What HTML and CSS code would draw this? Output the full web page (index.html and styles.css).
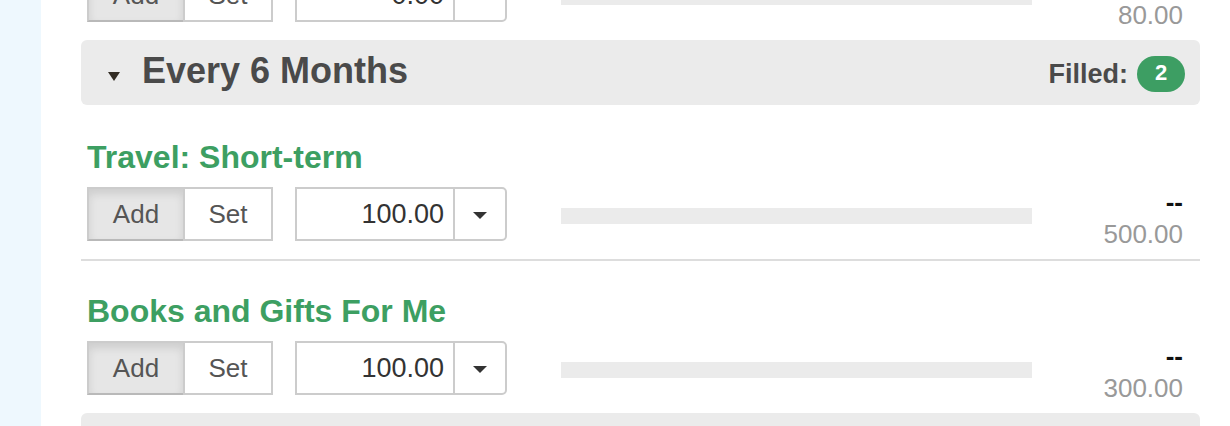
FILE: index.html
```html
<!doctype html>
<html>
    <head>
        <title>Budget</title>
        <link rel="stylesheet" href="styles.css">
    </head>
    <body>
        <div class="sidebar"></div>
        <div class="main">
            <div class="budget">
                <div class="group">
                    <div class="item first">
                        <div class="row">
                            <div class="mode"><button class="add">Add</button><button class="set">Set</button></div>
                            <div class="amount-input"><input class="value" type="text" value="0.00"><span class="pick"><span class="caret"></span></span></div>
                            <div class="bar"></div>
                            <div class="totals"><div class="spent">--</div><div class="budgeted">80.00</div></div>
                        </div>
                    </div>
                </div>

                <div class="group">
                    <div class="group-header">
                        <span class="toggle"></span>
                        <h2 class="group-title">Every 6 Months</h2>
                        <div class="filled">Filled: <span class="badge">2</span></div>
                    </div>
                    <div class="item">
                        <h3 class="item-title">Travel: Short-term</h3>
                        <div class="row">
                            <div class="mode"><button class="add">Add</button><button class="set">Set</button></div>
                            <div class="amount-input"><input class="value" type="text" value="100.00"><span class="pick"><span class="caret"></span></span></div>
                            <div class="bar"></div>
                            <div class="totals"><div class="spent">--</div><div class="budgeted">500.00</div></div>
                        </div>
                    </div>
                    <div class="item">
                        <h3 class="item-title">Books and Gifts For Me</h3>
                        <div class="row">
                            <div class="mode"><button class="add">Add</button><button class="set">Set</button></div>
                            <div class="amount-input"><input class="value" type="text" value="100.00"><span class="pick"><span class="caret"></span></span></div>
                            <div class="bar"></div>
                            <div class="totals"><div class="spent">--</div><div class="budgeted">300.00</div></div>
                        </div>
                    </div>
                </div>

                <div class="group">
                    <div class="group-header"></div>
                </div>
            </div>
        </div>
    </body>
</html>
```

FILE: styles.css
```css
html, body {
    height: 100%;
    overflow: hidden;
}
body {
    margin: 0;
    display: flex;
    background: #fff;
    color: #333;
    font-family: 'Liberation Sans', Arial, sans-serif;
}
.sidebar {
    flex: none;
    width: 41px;
    background: #eef8fe;
}
.main {
    flex: 1;
    padding: 0 30px 0 40px;
}
.budget {
    margin-top: -32px;
}
.group-header {
    display: flex;
    align-items: center;
    height: 65px;
    padding: 0 15px 0 27px;
    margin-bottom: 2px;
    background: #ebebeb;
    border-radius: 6px;
    color: #4a4a4a;
}
.toggle {
    width: 0;
    height: 0;
    border-left: 6.5px solid transparent;
    border-right: 6.5px solid transparent;
    border-top: 9px solid #332d24;
    margin: 8px 22px 0 0;
}
.group-title {
    flex: 1;
    margin: 0 0 3px;
    font-size: 36px;
    line-height: 40px;
}
.filled {
    display: flex;
    align-items: center;
    gap: 9px;
    margin-top: 3px;
    font-size: 27px;
    line-height: 36px;
    font-weight: bold;
}
.badge {
    display: flex;
    align-items: center;
    justify-content: center;
    width: 48px;
    height: 36px;
    box-sizing: border-box;
    padding-bottom: 3px;
    border-radius: 18px;
    background: #3d9e63;
    color: #fff;
    font-size: 22px;
}
.item {
    padding: 32px 17px 18px 6px;
    border-bottom: 2px solid #ddd;
}
.item:last-child {
    border-bottom: none;
}
.item.first {
    padding-top: 0;
}
.item-title {
    margin: 0 0 12px;
    font-size: 32px;
    line-height: 36px;
    color: #3d9f62;
}
.row {
    display: flex;
    align-items: flex-start;
    height: 54px;
}
.mode {
    display: flex;
}
.mode button {
    height: 54px;
    padding: 0;
    border: 2px solid #ccc;
    background: #fff;
    color: #555;
    font-family: inherit;
    font-size: 26px;
}
.mode .add {
    width: 98px;
    background: #e6e6e6;
    border-bottom-color: #b9b9b9;
    box-shadow: inset 0 5px 8px rgba(0, 0, 0, 0.11);
}
.mode .set {
    width: 90px;
    margin-left: -2px;
}
.amount-input {
    display: flex;
    margin-left: 22px;
}
.amount-input .value {
    width: 158px;
    height: 54px;
    box-sizing: border-box;
    margin: 0;
    padding: 0 9px 0 0;
    border: 2px solid #ccc;
    border-right: none;
    outline: none;
    text-align: right;
    color: #333;
    font-family: inherit;
    font-size: 27px;
}
.pick {
    display: flex;
    align-items: center;
    justify-content: center;
    width: 54px;
    height: 54px;
    box-sizing: border-box;
    border: 2px solid #ccc;
    border-radius: 0 5px 5px 0;
}
.caret {
    width: 0;
    height: 0;
    border-left: 7px solid transparent;
    border-right: 7px solid transparent;
    border-top: 7px solid #333;
    margin-top: 2px;
}
.bar {
    flex: none;
    width: 471px;
    height: 16px;
    margin: 21px 0 0 54px;
    background: #ebebeb;
}
.totals {
    flex: 1;
    margin-top: -2px;
    text-align: right;
    font-size: 26px;
    line-height: 34px;
}
.spent {
    font-weight: bold;
    color: #111;
}
.budgeted {
    color: #999;
    line-height: 30px;
}
```
